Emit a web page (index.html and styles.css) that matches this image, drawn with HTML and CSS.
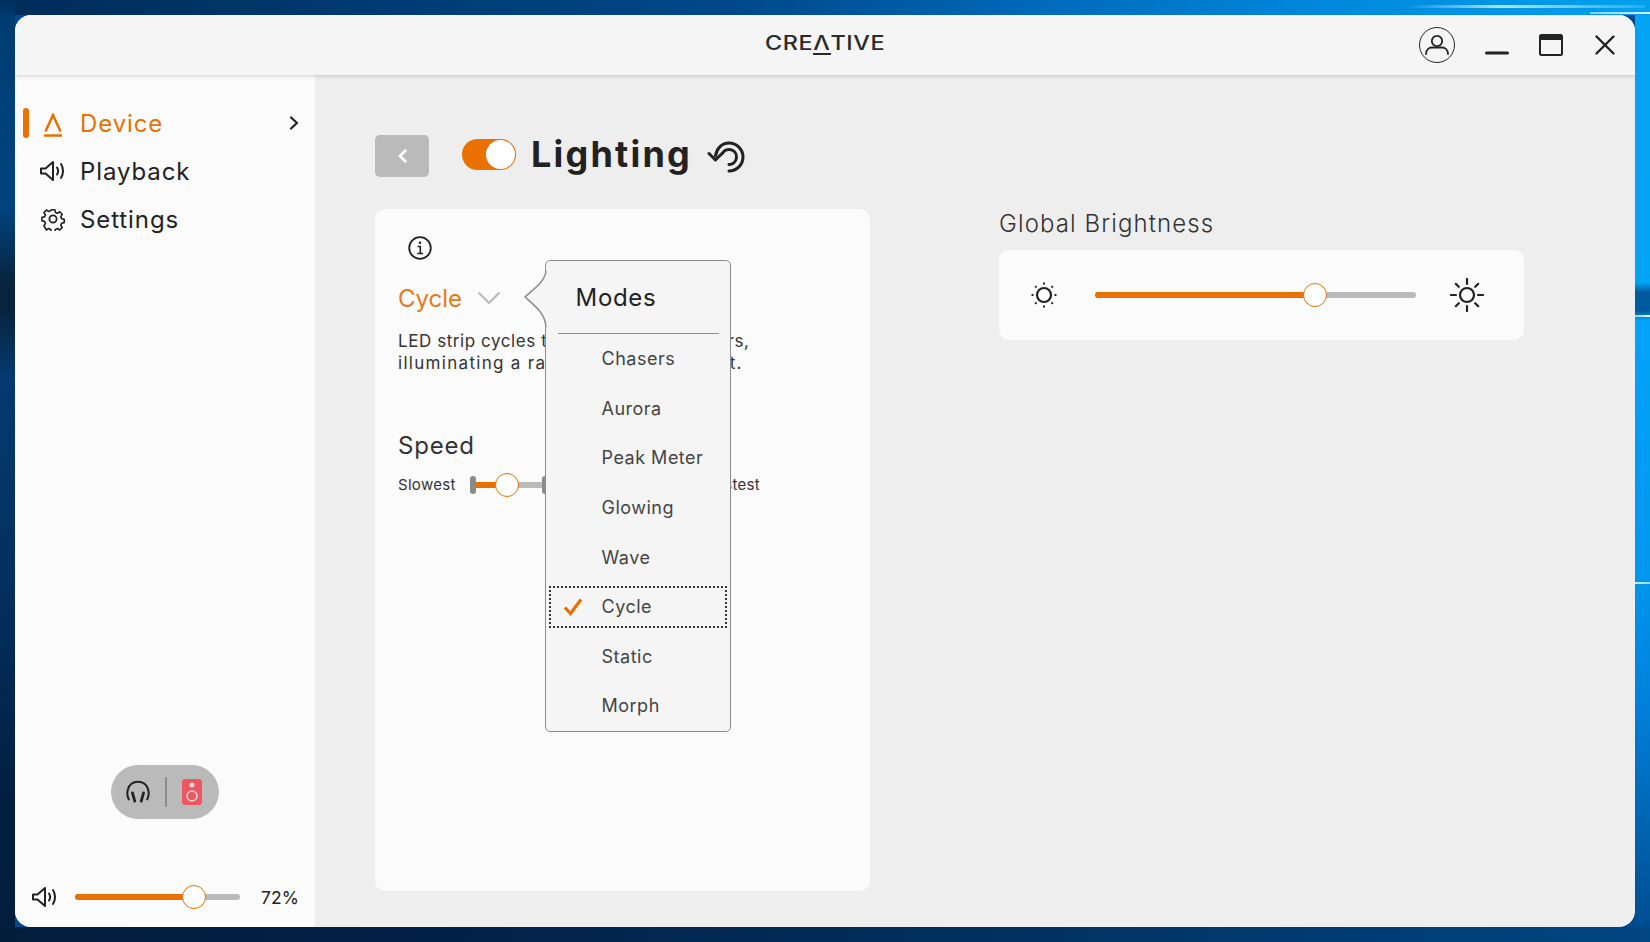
FILE: index.html
```html
<!DOCTYPE html>
<html lang="en">
<head>
<meta charset="utf-8">
<title>Creative - Lighting</title>
<link rel="stylesheet" href="styles.css">
</head>
<body>
<div class="window">
  <header class="titlebar">
    <div class="logo">CRE<span class="logo-a">Λ</span>TIVE</div>
    <div class="title-actions">
      <svg class="ic-user" width="38" height="38" viewBox="0 0 38 38" fill="none" stroke="#222"><circle cx="19" cy="19" r="17.5" stroke-width="1"/><circle cx="19" cy="15" r="5.2" stroke-width="1.8"/><path d="M8 28c0-4.5 3-6.5 6-6.5h10c3 0 6 2 6 6.5" stroke-width="1.8" stroke-linecap="round"/></svg>
      <svg class="ic-min" width="24" height="4" viewBox="0 0 24 4"><rect y="0.5" width="24" height="3" rx="1.5" fill="#222"/></svg>
      <svg class="ic-max" width="24" height="22" viewBox="0 0 24 22" fill="none"><rect x="1" y="1" width="22" height="20" rx="1.5" stroke="#222" stroke-width="2"/><rect x="1" y="1" width="22" height="5" fill="#222"/></svg>
      <svg class="ic-close" width="20" height="20" viewBox="0 0 20 20"><path d="M1.5 1.5l17 17M18.5 1.5l-17 17" stroke="#222" stroke-width="2.4" stroke-linecap="round"/></svg>
    </div>
  </header>
  <div class="body">
    <aside class="sidebar">
      <nav class="nav">
        <div class="nav-item active">
          <span class="nav-mark"></span>
          <span class="nav-icon nav-icon-device"><svg width="20" height="24" viewBox="0 0 20 24" fill="none" stroke="#ea7000" stroke-width="2.5"><path d="M2.500 18.500L10 2l7.500 16.500"/><path d="M1 22.500h18"/></svg></span>
          <span class="nav-label">Device</span>
          <svg class="nav-chev" width="10" height="14" viewBox="0 0 10 14" fill="none"><path d="M2 1.5L8 7l-6 5.5" stroke="#222" stroke-width="2.2" stroke-linecap="round" stroke-linejoin="round"/></svg>
        </div>
        <div class="nav-item">
          <span class="nav-mark off"></span>
          <span class="nav-icon"><svg width="26" height="22" viewBox="0 0 26 22" fill="none" stroke="#222" stroke-width="2" stroke-linejoin="round" stroke-linecap="round"><path d="M1 8.5v5h4.5L13 20V2L5.500 8.500z"/><path d="M17 7.500c1.300 2 1.300 5 0 7"/><path d="M21 4c2.700 4 2.700 10 0 14"/></svg></span>
          <span class="nav-label">Playback</span>
        </div>
        <div class="nav-item">
          <span class="nav-mark off"></span>
          <span class="nav-icon"><svg width="24" height="24" viewBox="0 0 24 24" fill="none" stroke="#222" stroke-width="1.8" stroke-linejoin="round"><circle cx="12" cy="12" r="3.600"/><path d="M10 1.500h4l.6 3 2.300 1 2.600-1.700 2.800 2.800-1.700 2.600 1 2.300 2.900.6v3.900l-2.900.6-1 2.300 1.700 2.600-2.800 2.800-2.600-1.700-2.300 1-.6 2.900h-4l-.6-2.900-2.300-1-2.600 1.700L1.700 19.500l1.700-2.600-1-2.300-2.900-.6v-3.900l2.900-.6 1-2.300-1.700-2.600 2.800-2.800 2.600 1.700 2.300-1z" transform="translate(1.400 1.400) scale(.89)"/></svg></span>
          <span class="nav-label">Settings</span>
        </div>
      </nav>
      <div class="output-switch">
        <svg width="24" height="26" viewBox="0 0 26 26" fill="none" stroke="#222" stroke-linecap="round"><path d="M3 21C1 17 1 14 2 10.500 3.500 5 8 2 13 2s9.500 3 11 8.500c1 3.500 1 6.500-1 10.500" stroke-width="2.200"/><path d="M7 14l2.500 9M19 14l-2.500 9" stroke-width="3"/></svg>
        <span class="switch-div"></span>
        <svg width="20" height="26" viewBox="0 0 20 26"><rect width="20" height="26" rx="3" fill="#f0565f"/><circle cx="10" cy="6" r="2.500" fill="#d9d9d9"/><circle cx="10" cy="17" r="5" fill="none" stroke="#d9d9d9" stroke-width="1.500"/></svg>
      </div>
      <div class="volume">
        <svg width="26" height="22" viewBox="0 0 26 22" fill="none" stroke="#222" stroke-width="2" stroke-linejoin="round" stroke-linecap="round"><path d="M1 8.500v5h4.500L13 20V2L5.500 8.500z"/><path d="M17 7.500c1.300 2 1.300 5 0 7"/><path d="M21 4c2.700 4 2.700 10 0 14"/></svg>
        <div class="slider vol-slider"><div class="fill" style="width:72%"></div><span class="knob" style="left:72%"></span></div>
        <span class="vol-val">72%</span>
      </div>
    </aside>
    <main class="main">
      <div class="page-head">
        <button class="back"><svg width="11" height="16" viewBox="0 0 11 16" fill="none"><path d="M8.500 2.500L3 8l5.500 5.500" stroke="#fff" stroke-width="2.600" stroke-linecap="round" stroke-linejoin="round"/></svg></button>
        <span class="toggle"><span class="toggle-knob"></span></span>
        <h1 class="page-title">Lighting</h1>
        <svg class="reset" width="38" height="32" viewBox="0 0 38 32" fill="none" stroke="#222" stroke-width="3" stroke-linecap="round" stroke-linejoin="round"><path d="M8.500 15C9.500 7.500 15 2 22 2c7.700 0 14 6.300 14 14s-6.300 14-14 14"/><path d="M22 23.500a7.500 7.500 0 1 0-6.500-11.200"/><path d="M2 12.500l6.500 6.500 6.500-6.500"/></svg>
      </div>
      <div class="columns">
        <section class="card lighting-card">
          <svg class="info" width="24" height="24" viewBox="0 0 24 24" fill="none" stroke="#222"><circle cx="12" cy="12" r="10.800" stroke-width="1.800"/><circle cx="12" cy="6.800" r="1.300" fill="#222" stroke="none"/><path d="M9.500 10.500H12.300V17.500M9.300 17.500H15" stroke-width="1.600"/></svg>
          <div class="mode-row">
            <span class="mode-name">Cycle</span>
            <svg width="24" height="14" viewBox="0 0 24 14" fill="none"><path d="M1.500 1.500L12 12 22.500 1.500" stroke="#bababa" stroke-width="2.200"/></svg>
          </div>
          <p class="desc">LED strip cycles through different colors,<br><span class="desc-wide">illuminating a radiant display of light.</span></p>
          <h2 class="speed-title">Speed</h2>
          <div class="speed-row">
            <span class="speed-label">Slowest</span>
            <div class="speed-track">
              <div class="slider speed-slider"><div class="fill" style="width:13%"></div><span class="knob" style="left:16.800%"></span></div>
              <span class="tick tick-a"></span><span class="tick tick-b"></span>
            </div>
            <span class="speed-label">Fastest</span>
          </div>
          <div class="popover">
            <svg class="pop-tail" width="24" height="58" viewBox="0 0 24 58" fill="#f5f5f5" stroke="#8c8c8c" stroke-width="1.500"><path d="M23 1C22 11 12 18 2 27c10 9 20 16 21 30"/></svg>
            <div class="pop-title">Modes</div>
            <ul class="pop-list">
              <li class="pop-item">Chasers</li>
              <li class="pop-item">Aurora</li>
              <li class="pop-item">Peak Meter</li>
              <li class="pop-item">Glowing</li>
              <li class="pop-item">Wave</li>
              <li class="pop-item selected">
                <svg class="check" width="20" height="18" viewBox="0 0 20 18" fill="none"><path d="M2 9.500L7.500 15.500 18 1.500" stroke="#ea7000" stroke-width="3.200"/></svg>Cycle</li>
              <li class="pop-item">Static</li>
              <li class="pop-item">Morph</li>
            </ul>
          </div>
        </section>
        <section class="right-col">
          <h2 class="bright-title">Global Brightness</h2>
          <div class="card bright-card">
            <svg width="28" height="28" viewBox="0 0 28 28" fill="none" stroke="#222"><circle cx="14" cy="14" r="7" stroke-width="2.200"/><path d="M14 1.500v2M14 24.500v2M1.500 14h2M24.500 14h2M5.200 5.200l1.300 1.300M21.500 21.500l1.300 1.300M5.200 22.800l1.300-1.300M21.500 6.500l1.300-1.300" stroke-width="2"/></svg>
            <div class="slider bright-slider"><div class="fill" style="width:68.500%"></div><span class="knob" style="left:68.500%"></span></div>
            <svg width="34" height="34" viewBox="0 0 34 34" fill="none" stroke="#222" stroke-width="2.200" stroke-linecap="round"><circle cx="17" cy="17" r="7"/><path d="M17 1v5M17 28v5M1 17h5M28 17h5M5.800 5.800l3 3M25.200 25.200l3 3M5.800 28.200l3-3M25.200 8.800l3-3"/></svg>
          </div>
        </section>
      </div>
    </main>
  </div>
</div>
</body>
</html>
```
FILE: styles.css
```css
* { box-sizing: border-box; }
html, body { margin: 0; height: 100%; }
body {
  width: 1650px;
  height: 942px;
  padding: 15px;
  overflow: hidden;
  font-family: "Inter", "Liberation Sans", sans-serif;
  color: #222;
  background-color: #004a8c;
  background-repeat: no-repeat;
  background-image:
    linear-gradient(90deg, rgba(255,255,255,0), rgba(255,255,255,.7) 40%, rgba(255,255,255,.15)),
    linear-gradient(90deg, rgba(255,255,255,.5), rgba(255,255,255,.85)),
    linear-gradient(90deg, rgba(255,255,255,.8), rgba(255,255,255,.6)),
    linear-gradient(90deg, rgba(255,255,255,.6), rgba(255,255,255,.9)),
    linear-gradient(180deg, #002e5a 0, #003a70 100%),
    linear-gradient(90deg, #002c58 0, #003c74 25%, #00498a 45%, #0068b8 62%, #0088dc 80%, #00a0ee 100%),
    linear-gradient(90deg, #021c3c 0, #02224a 30%, #02305e 60%, #004683 100%),
    linear-gradient(180deg, #003c70 0, #004480 22%, #08243f 30%, #08243f 33%, #043a70 40%, #03305e 62%, #021f42 85%, #021c3c 100%),
    linear-gradient(180deg, #00a4f2 0, #00a4f4 30%, #005b9e 31%, #005b9e 33%, #00a4f8 34%, #0098ee 60%, #0080da 75%, #0064b0 88%, #004a8c 100%);
  background-size: 240px 3px, 60px 2px, 15px 2px, 15px 2px, 15px 15px, 1650px 15px, 1650px 15px, 15px 942px, 15px 942px;
  background-position: 1405px 5px, 1590px 12px, 1635px 582px, 1635px 315px, 0 0, 0 0, 0 927px, 0 0, 1635px 0;
}
.window {
  width: 1620px;
  height: 912px;
  border-radius: 16px;
  overflow: hidden;
  display: flex;
  flex-direction: column;
  background: #eee;
}
.titlebar {
  height: 60px;
  flex: none;
  background: #f5f5f5;
  box-shadow: 0 1px 4px rgba(0,0,0,.18);
  position: relative;
  z-index: 2;
  display: flex;
  align-items: center;
  justify-content: center;
}
.logo {
  font-size: 19.500px;
  font-weight: 500;
  letter-spacing: .5px;
  color: #2a2a2a;
  line-height: 1;
  margin-top: -1px;
  transform: scaleX(1.200);
}
.logo-a { border-bottom: 2px solid #2a2a2a; display: inline-block; }
.title-actions {
  position: absolute;
  right: 20px;
  top: 0;
  height: 60px;
  display: flex;
  align-items: center;
}
.ic-user { margin-right: 29px; }
.ic-min { margin-right: 30px; margin-top: 16px; }
.ic-max { margin-right: 32px; margin-top: 0; }
.body { flex: 1; display: flex; min-height: 0; }

.sidebar {
  width: 300px;
  flex: none;
  background: #fbfbfb;
  display: flex;
  flex-direction: column;
}
.nav { padding-top: 24px; display: flex; flex-direction: column; }
.nav-item {
  height: 48px;
  display: flex;
  align-items: center;
  font-size: 24px;
  letter-spacing: .9px;
  color: #222;
}
.nav-item.active { color: #ea7000; }
.nav-mark { width: 6px; height: 30px; border-radius: 3px; background: #ea7000; margin-left: 8px; }
.nav-mark.off { background: transparent; }
.nav-icon { width: 26px; margin-left: 11px; display: flex; justify-content: center; }
.nav-icon-device { margin-top: 3px; }
.nav-label { margin-left: 14px; margin-top: 1px; flex: 1; }
.nav-chev { margin-right: 16px; }

.output-switch {
  width: 108px;
  height: 54px;
  margin: auto auto 0;
  padding-left: 15px;
  border-radius: 27px;
  background: #bababa;
  display: flex;
  align-items: center;
  gap: 15px;
}
.switch-div { width: 2px; height: 30px; background: #8c8c8c; }
.volume {
  height: 24px;
  margin: 66px 0 18px;
  padding-left: 17px;
  display: flex;
  align-items: center;
}
.vol-slider { width: 165px; margin-left: 17px; }
.vol-val { margin-left: 21px; font-size: 17.500px; letter-spacing: .1px; }

.slider { height: 6px; background: #bababa; border-radius: 3px; position: relative; }
.fill { height: 100%; background: #ea7000; border-radius: 3px; }
.knob {
  position: absolute;
  top: 50%;
  width: 24px;
  height: 24px;
  border-radius: 50%;
  background: #fff;
  border: 1.500px solid #ea7000;
  transform: translate(-50%, -50%);
}

.main { flex: 1; padding: 60px 0 36px 60px; min-width: 0; display: flex; flex-direction: column; }
.page-head { height: 42px; display: flex; align-items: center; flex: none; }
.back {
  width: 54px;
  height: 42px;
  border: 0;
  padding: 0;
  border-radius: 5px;
  background: #bababa;
  display: flex;
  align-items: center;
  justify-content: center;
}
.toggle {
  width: 54px;
  height: 31px;
  margin: -3px 0 0 33px;
  border-radius: 16px;
  background: #ea7000;
  display: flex;
  align-items: center;
  justify-content: flex-end;
  padding-right: 1px;
}
.toggle-knob { width: 29px; height: 29px; border-radius: 50%; background: #fff; }
.page-title {
  margin: -4px 0 0 15px;
  font-size: 36px;
  font-weight: 700;
  letter-spacing: 2.200px;
  line-height: 42px;
  color: #222;
}
.reset { margin-left: 15px; margin-top: 1px; }

.columns { flex: 1; display: flex; margin-top: 32px; min-height: 0; }
.card { background: #fbfbfb; border-radius: 10px; }
.lighting-card {
  width: 495px;
  padding: 27px 23px 0;
  position: relative;
  display: flex;
  flex-direction: column;
}
.info { margin-left: 10px; flex: none; }
.mode-row { display: flex; align-items: center; height: 30px; margin-top: 23px; gap: 15px; }
.mode-name { font-size: 24px; color: #e8781a; }
.desc { margin: 17px 0 0; font-size: 17px; line-height: 22px; color: #333; letter-spacing: .57px; white-space: nowrap; }
.desc-wide { letter-spacing: 1.300px; }
.speed-title { margin: 57px 0 0; font-size: 24px; line-height: 30px; font-weight: 400; color: #333; letter-spacing: .8px; }
.speed-row { display: flex; align-items: center; margin-top: 12px; height: 24px; }
.speed-label { font-size: 15px; color: #333; letter-spacing: .3px; white-space: nowrap; margin-top: -1px; }
.speed-track { position: relative; width: 223px; margin: 0 14px; }
.speed-slider { width: 100%; }
.tick { position: absolute; top: -6px; width: 6px; height: 18px; border-radius: 3px; background: #8a8a8a; }
.tick-a { left: 0; }
.tick-b { left: 72px; }

.popover {
  position: absolute;
  left: 170px;
  top: 51px;
  width: 186px;
  height: 472px;
  border: 1.500px solid #8c8c8c;
  border-radius: 5px;
  background: #f5f5f5;
  padding: 0 1.500px;
}
.pop-tail { position: absolute; left: -23px; top: 9px; }
.pop-title {
  height: 73px;
  margin: 0 10px;
  padding-left: 18px;
  display: flex;
  align-items: center;
  border-bottom: 1px solid #8c8c8c;
  font-size: 24px;
  letter-spacing: .7px;
  color: #222;
}
.pop-list { list-style: none; margin: 3.800px 0 0; padding: 0; display: flex; flex-direction: column; gap: 7.600px; }
.pop-item {
  height: 42px;
  padding-left: 53px;
  margin-left: 1px;
  display: flex;
  align-items: center;
  position: relative;
  font-size: 18px;
  letter-spacing: .5px;
  color: #444;
  margin-right: 2px;
}
.selected { outline: 2px dotted #333; outline-offset: -2px; }
.check { position: absolute; left: 14px; top: 12px; }

.right-col { width: 525px; margin-left: 129px; }
.bright-title { margin: 0; height: 41px; padding-top: 1px; font-size: 24px; line-height: 28px; font-weight: 300; letter-spacing: 1.100px; color: #333; }
.bright-card {
  height: 90px;
  display: flex;
  align-items: center;
  padding: 0 40px 0 31px;
}
.bright-slider { width: 321px; margin: 0 34px 0 37px; }
```
